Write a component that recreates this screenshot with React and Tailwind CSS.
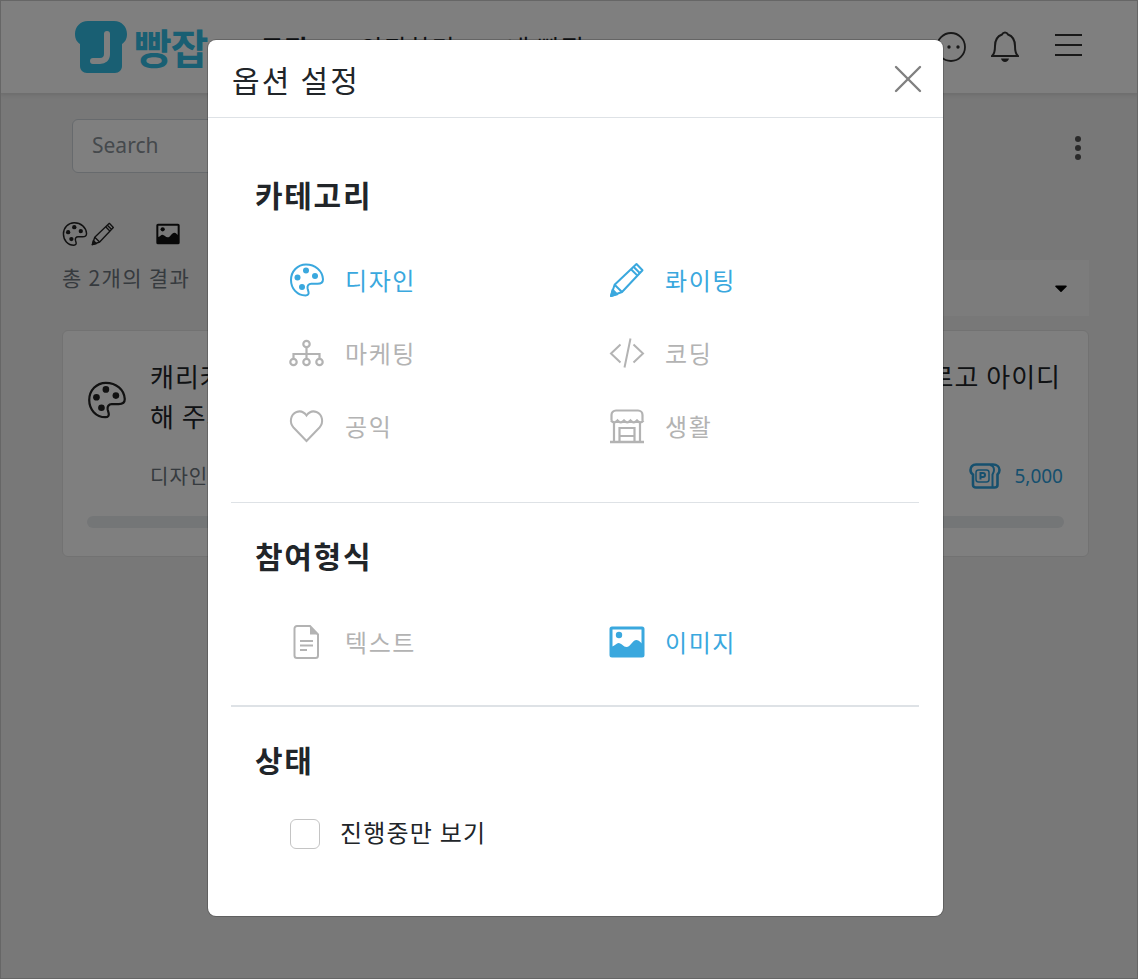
import React from "react";
import { X } from "lucide-react";
import { FaCaretDown } from "react-icons/fa";

const blue = "#3aa8de";
const gray = "#b3b3b3";

function Palette({ size = 36, color = blue, sw = 2 }) {
  return (
    <svg width={size} height={size} viewBox="0 0 36 36" fill="none">
      <path d="M17 2.500C8.500 2.500 2 9.500 2 18c0 8.500 6 15.500 14.500 15.500 2.600 0 3.500-1.600 3-3.600l-.9-3.400c-.6-2.600 1-4.700 3.600-4.700h6.300c3.300 0 5.500-1.600 5.500-4.600C33.500 8.800 26.300 2.500 17 2.500Z" stroke={color} strokeWidth={sw} />
      <circle cx="17" cy="8.500" r="3" fill={color} />
      <circle cx="8.500" cy="15.500" r="3" fill={color} />
      <circle cx="26" cy="14" r="3" fill={color} />
      <circle cx="13" cy="25" r="3" fill={color} />
    </svg>
  );
}
function Pencil({ size = 36, color = blue, sw = 2 }) {
  return (
    <svg width={size} height={size} viewBox="0 0 36 36" fill="none" stroke={color} strokeWidth={sw} strokeLinejoin="round">
      <path d="M2 34l3.600-11.200L27.500 2l6 6.200L13 30z" />
      <path d="M5.600 22.800 13 30M24.500 4.800l6.200 6.200M22 7.200l6.200 6.200" />
      <path d="M2 34l1.600-6.200 4.600 4.600z" fill={color} />
    </svg>
  );
}
function Org() {
  return (
    <svg width="36" height="36" viewBox="0 0 36 36" fill="none" stroke={gray} strokeWidth="2.200">
      <circle cx="17.500" cy="9" r="3.200" />
      <circle cx="4.500" cy="27" r="3.200" />
      <circle cx="17.500" cy="27" r="3.200" />
      <circle cx="30.500" cy="27" r="3.200" />
      <path d="M17.500 12v12M4.500 24v-5h26v5" />
    </svg>
  );
}
function Code() {
  return (
    <svg width="36" height="36" viewBox="0 0 36 36" fill="none" stroke={gray} strokeWidth="2">
      <path d="M11.500 9.500 2 18.500l9.500 9M24.500 9.500l9.500 9-9.500 9M21.500 3.500l-6 29" />
    </svg>
  );
}
function Heart() {
  return (
    <svg width="36" height="36" viewBox="0 0 36 36" fill="none" stroke={gray} strokeWidth="2">
      <path d="M17.500 33 4.500 19.500C0 14.500 1.500 6.500 7.500 4c4-1.500 7.500 0 10 3.500C20 4 23.500 2.500 27.500 4c6 2.500 7.500 10.500 3 15.500z" />
    </svg>
  );
}
function Store() {
  return (
    <svg width="36" height="36" viewBox="0 0 36 36" fill="none" stroke={gray} strokeWidth="2.200">
      <path d="M7 2.500h22c2.500 0 4.500 2 4.500 4.500v5.500M7 2.500C4.500 2.500 2.500 4.500 2.500 7v5.500" />
      <path d="M2 12.500c2 2.500 4.500 2.500 6.500 0 2 2.500 4.500 2.500 6.500 0 2 2.500 4.500 2.500 6.500 0 2 2.500 4.500 2.500 6.500 0 2 2.500 4.500 2.500 6.500 0" />
      <path d="M5 15v18M31 15v18M10.500 33V20h15v13M10.500 28h15" />
      <path d="M1 34h34" strokeWidth="2.600" />
    </svg>
  );
}
function FileIcon() {
  return (
    <svg width="36" height="36" viewBox="0 0 36 36" fill="none" stroke={gray} strokeWidth="2">
      <path d="M8 2h13l8 8.500V31.500a2.500 2.500 0 0 1-2.500 2.500H8a2.500 2.500 0 0 1-2.500-2.500V4.500A2.500 2.500 0 0 1 8 2Z" />
      <path d="M21 2l8 8.500h-8z" fill={gray} stroke="none" />
      <path d="M11 17h13M11 21.500h13M11 26h7" strokeWidth="2.200" />
    </svg>
  );
}
function ImageIcon({ size = 36, color = blue }) {
  return (
    <svg width={size} height={size} viewBox="0 0 36 36">
      <path fillRule="evenodd" fill={color} d="M3 2.500h30a2.500 2.500 0 0 1 2.500 2.500v26a2.500 2.500 0 0 1-2.500 2.500H3A2.500 2.500 0 0 1 .5 31V5A2.500 2.500 0 0 1 3 2.500ZM3.500 5.500v17c2.500-1 4-3.500 6-3.500 3 0 5 4 8 4 4 0 6-7 10-7 2.500 0 4.500 2.500 5 3.500V5.500z" />
      <circle cx="10" cy="11" r="3.200" fill={color} />
    </svg>
  );
}
function Logo() {
  return (
    <svg width="54" height="54" viewBox="0 0 54 54">
      <path d="M14 1h26c8 0 13 6 13 13 0 5-2 8-5 10v22c0 4-3 7-7 7H13c-4 0-7-3-7-7V24c-3-2-5-5-5-10C1 7 6 1 14 1Z" fill="#33bfe6" />
      <path d="M33 14v20c0 5-3 7-7 7h-7" fill="none" stroke="#fff" strokeWidth="6" strokeLinecap="round" />
    </svg>
  );
}
function Bread() {
  return (
    <svg width="32" height="26" viewBox="0 0 32 26" fill="none" stroke="#2da0dd" strokeWidth="2.600">
      <path d="M7 1.500h17c4 0 6.500 2.500 6.500 5.500 0 2-1 3.500-2 4.500V22c0 1.500-1 2.500-3 2.500H7c-2 0-3-1-3-2.500V11.500c-1.500-1-2.500-2.500-2.500-4.500 0-3 2-5.500 5.500-5.500Z" />
      <path d="M21 2c3 .5 4 3 4 5 0 2-1 3.500-1.500 4.500V24" strokeWidth="2" />
      <rect x="7" y="7" width="13" height="12" rx="2.500" stroke="#2da0dd" strokeWidth="1.500" />
      <path d="M11.500 16.500v-6.500h2.500a2 2 0 0 1 0 4h-2.500" stroke="#2da0dd" strokeWidth="2" />
    </svg>
  );
}

function Opt({ icon, label, on, w }) {
  return (
    <div className={`flex items-center h-[73px] ${w}`}>
      <span className="w-[36px] h-[36px] flex items-center justify-center shrink-0">{icon}</span>
      <span className={`ml-[20px] text-[24px] leading-[36px] tracking-[1.6px] ${on ? "text-[#3aa8de]" : "text-[#b3b3b3]"}`}>{label}</span>
    </div>
  );
}

export default function App() {
  return (
    <div className="relative h-[979px] w-[1138px] overflow-hidden bg-[#f0f0f0] text-[#212529] font-['Noto_Sans_CJK_KR','Noto_Sans',sans-serif]">
      {/* page */}
      <header className="h-[93px] bg-white shadow-[0_2px_4px_rgba(0,0,0,0.1)] flex items-center pl-[74px] pr-[56px]">
        <Logo />
        <span className="ml-[6px] text-[41px] font-bold text-[#33bfe6] leading-none tracking-[-1px]">빵잡</span>
        <nav className="ml-[53px] flex gap-[51px] text-[25px] tracking-[1px] mt-[2px]">
          <span className="font-bold">도전</span>
          <span>의뢰하기</span>
          <span>내 빵집</span>
        </nav>
        <div className="ml-auto flex items-center text-[#444]">
          <svg width="30" height="30" viewBox="0 0 30 30" fill="none" stroke="#333" strokeWidth="1.800">
            <circle cx="15" cy="15" r="14" />
            <circle cx="13" cy="15" r="1.700" fill="#333" stroke="none" />
            <circle cx="22" cy="15" r="1.700" fill="#333" stroke="none" />
          </svg>
          <svg className="ml-[25px]" width="28" height="33" viewBox="0 0 28 33" fill="none" stroke="#333" strokeWidth="2">
            <path d="M1 26h26c-2.500-2-3-5-3-10 0-6-3-10-7-11.500-.5-1-1-2-3-2s-2.500 1-3 2C7 6 4 10 4 16c0 5-.5 8-3 10Z" />
            <path d="M10 28.500c.5 2 2 3.500 4 3.500s3.500-1.500 4-3.500z" fill="#333" stroke="none" />
          </svg>
          <div className="ml-[36px] w-[27px] flex flex-col gap-[8px] mb-[3px]">
            <div className="h-[2px] bg-[#333]" /><div className="h-[2px] bg-[#333]" /><div className="h-[2px] bg-[#333]" />
          </div>
        </div>
      </header>
      <main className="pl-[62px] pr-[49px]">
        <div className="mt-[25px] flex items-center justify-between h-[56px] pl-[10px] pr-[2px]">
          <div className="h-[54px] w-[300px] rounded-[6px] border border-[#ced4da] bg-white flex items-center pl-[19px] text-[21px] text-[#8a9299] font-['Noto_Sans',sans-serif]">Search</div>
          <div className="flex flex-col gap-[3px] mr-[6px] mt-[4px]">
            <i className="block w-[6px] h-[6px] rounded-full bg-[#555]" /><i className="block w-[6px] h-[6px] rounded-full bg-[#555]" /><i className="block w-[6px] h-[6px] rounded-full bg-[#555]" />
          </div>
        </div>
        <div className="mt-[45px] flex items-center h-[30px]">
          <Palette size={26} color="#222" />
          <span className="ml-[3px]"><Pencil size={24} color="#222" /></span>
          <span className="ml-[41px]"><ImageIcon size={24} color="#111" /></span>
        </div>
        <div className="flex items-start justify-between h-[69px] mt-[-2px]">
          <span className="text-[21px] leading-[60px] tracking-[1.3px] text-[#6c757d]">총 2개의 결과</span>
          <div className="h-[56px] w-[300px] bg-[#f8f8f8] flex items-center justify-end pr-[18px] mt-[13px]">
            <FaCaretDown className="text-black text-[20px]" />
          </div>
        </div>
        <article className="mt-[14px] h-[227px] rounded-[6px] border border-[#e4e4e4] bg-white px-[24px] flex flex-col">
          <div className="flex pt-[25px]">
            <span className="mt-[24px]"><Palette size={40} color="#222" /></span>
            <div className="ml-[23px] text-[26px] leading-[40px] tracking-[1px] w-[911px]">
              <div className="flex justify-between"><span>캐리커처</span><span>로고 아이디</span></div>
              <div>해 주세요</div>
            </div>
          </div>
          <div className="flex items-center justify-between pl-[63px] mt-[25px] h-[30px] text-[20px]">
            <span className="text-[#6c757d] tracking-[1px]">디자인</span>
            <span className="flex items-center gap-[13px] text-[19px] text-[#2da0dd] mr-[1px] font-['Noto_Sans',sans-serif]"><Bread />5,000</span>
          </div>
          <div className="mt-[25px] h-[12px] rounded-full bg-[#e9ecef]" />
        </article>
      </main>

      {/* overlay */}
      <div className="absolute inset-0 bg-black/50 border border-[#666]" />
      <div className="absolute left-[208px] top-[40px] w-[735px] h-[876px] rounded-[8px] bg-white flex flex-col shadow-[0_0_0_1px_rgba(0,0,0,0.2)]">
        <div className="h-[78px] shrink-0 border-b border-[#dee2e6] flex items-center justify-between pl-[24px] pr-[11px]">
          <h2 className="text-[30px] font-normal leading-none tracking-[2.200px]">옵션 설정</h2>
          <X size={48} strokeWidth={1.2} color="#808080" />
        </div>
        <div className="pl-[23px] pr-[24px] flex-1 flex flex-col">
          <section className="h-[385px] border-b border-[#dee2e6] pt-[54px]">
            <h3 className="pl-[24px] text-[30px] font-bold leading-[44px] tracking-[1.700px]">카테고리</h3>
            <div className="mt-[27px] pl-[58px] flex flex-col">
              <div className="flex"><Opt on w="w-[320px]" icon={<Palette />} label="디자인" /><Opt on icon={<Pencil />} label="롸이팅" /></div>
              <div className="flex"><Opt w="w-[320px]" icon={<Org />} label="마케팅" /><Opt icon={<Code />} label="코딩" /></div>
              <div className="flex"><Opt w="w-[320px]" icon={<Heart />} label="공익" /><Opt icon={<Store />} label="생활" /></div>
            </div>
          </section>
          <section className="h-[204px] border-b-2 border-[#dee2e6] pt-[30px]">
            <h3 className="pl-[24px] text-[30px] font-bold leading-[44px] tracking-[1.700px]">참여형식</h3>
            <div className="mt-[28px] pl-[58px] flex">
              <Opt w="w-[320px]" icon={<FileIcon />} label="텍스트" />
              <Opt on icon={<ImageIcon />} label="이미지" />
            </div>
          </section>
          <section className="pt-[30px]">
            <h3 className="pl-[24px] text-[30px] font-bold leading-[44px] tracking-[1.700px]">상태</h3>
            <div className="mt-[33px] pl-[59px] flex items-center">
              <div className="w-[30px] h-[30px] rounded-[6px] border border-[#c4c4c4] bg-white" />
              <span className="ml-[20px] mb-[4px] text-[24px] leading-[36px] tracking-[1.2px]">진행중만 보기</span>
            </div>
          </section>
        </div>
      </div>
    </div>
  );
}
